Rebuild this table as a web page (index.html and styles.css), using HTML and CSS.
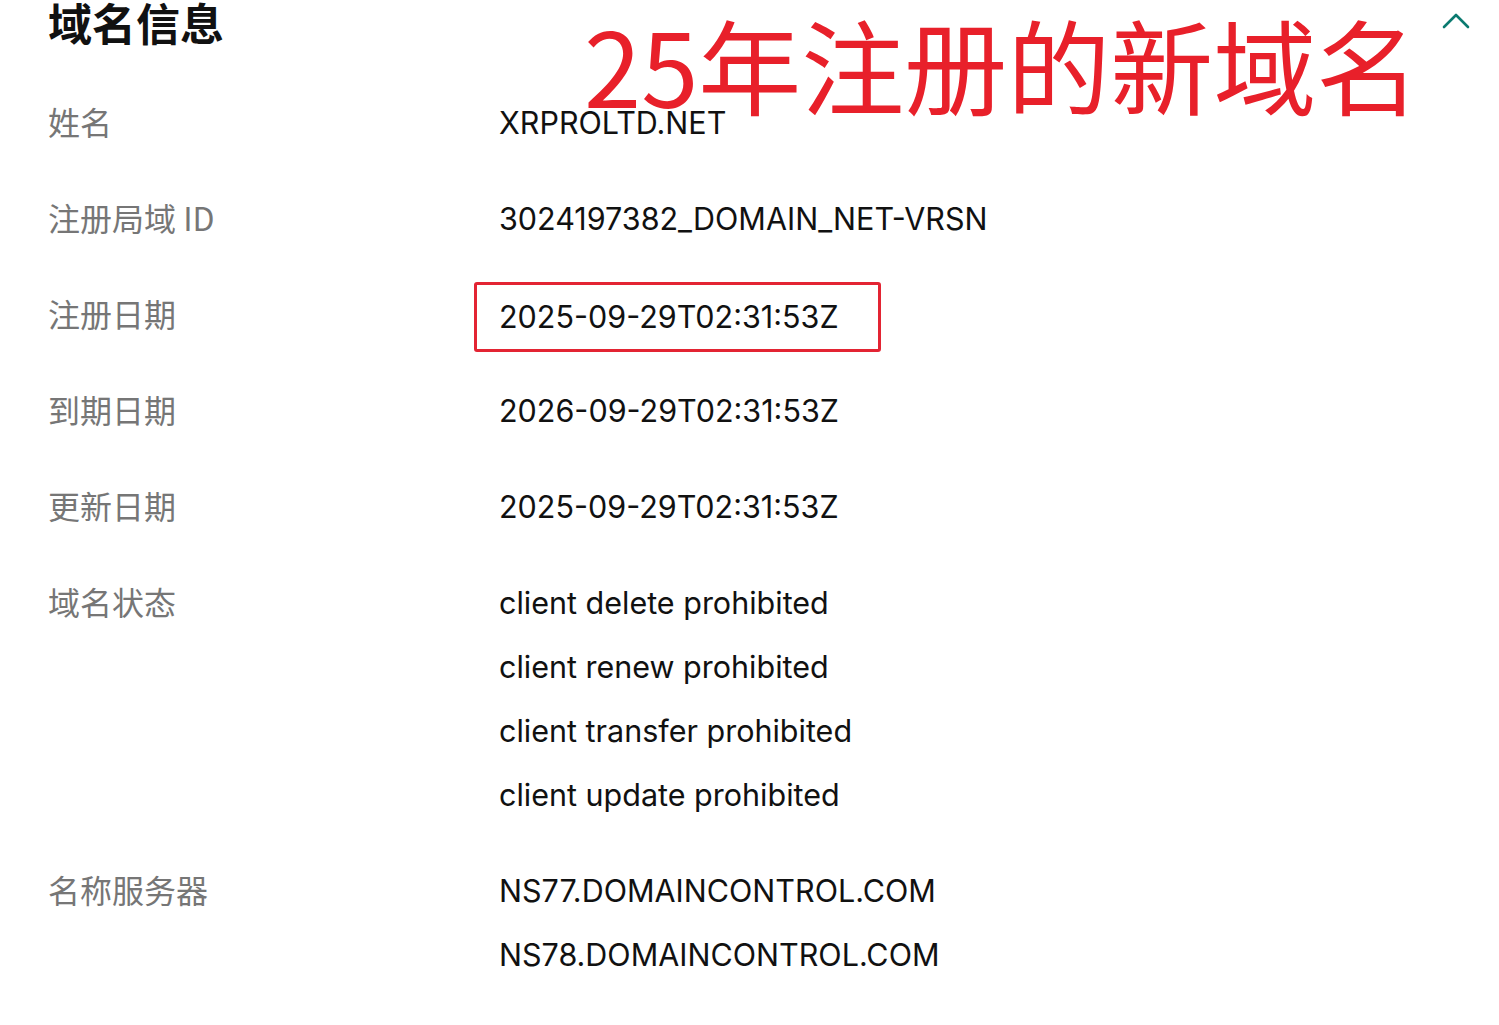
FILE: index.html
```html
<!DOCTYPE html>
<html lang="zh">
<head>
<meta charset="utf-8">
<title>域名信息</title>
<link rel="stylesheet" href="styles.css">
</head>
<body>
<div class="page">
  <header class="head">
    <h1 class="title">域名信息</h1>
    <svg class="chevron" width="30" height="20" viewBox="0 0 30 20"><polyline points="3,16 15,4 27,16" fill="none" stroke="#0b7a70" stroke-width="2.6" stroke-linecap="round" stroke-linejoin="round"/></svg>
  </header>
  <div class="overlay">25年注册的新域名</div>
  <dl class="info">
    <div class="row"><dt class="label">姓名</dt><dd class="value">XRPROLTD.NET</dd></div>
    <div class="row"><dt class="label">注册局域 ID</dt><dd class="value">3024197382_DOMAIN_NET-VRSN</dd></div>
    <div class="row"><dt class="label">注册日期</dt><dd class="value boxed"><span class="mark">2025-09-29T02:31:53Z</span></dd></div>
    <div class="row"><dt class="label">到期日期</dt><dd class="value">2026-09-29T02:31:53Z</dd></div>
    <div class="row"><dt class="label">更新日期</dt><dd class="value">2025-09-29T02:31:53Z</dd></div>
    <div class="row"><dt class="label">域名状态</dt><dd class="value list"><span>client delete prohibited</span><span>client renew prohibited</span><span>client transfer prohibited</span><span>client update prohibited</span></dd></div>
    <div class="row"><dt class="label">名称服务器</dt><dd class="value list"><span>NS77.DOMAINCONTROL.COM</span><span>NS78.DOMAINCONTROL.COM</span></dd></div>
  </dl>
</div>
</body>
</html>
```
FILE: styles.css
```css
html, body {
  margin: 0;
  padding: 0;
  background: #ffffff;
}
body {
  font-family: Inter, "Noto Sans", "Noto Sans CJK SC", sans-serif;
  color: #111111;
}
.page {
  position: relative;
  padding: 0 28px 0 48px;
}
.head {
  height: 75px;
  display: flex;
  justify-content: space-between;
  align-items: flex-start;
}
.title {
  margin: 0;
  font-family: "Noto Sans CJK SC", sans-serif;
  font-size: 44px;
  font-weight: 700;
  line-height: 50px;
  margin-top: -3px;
  color: #111111;
}
.chevron {
  margin-top: 11px;
}
.overlay {
  position: absolute;
  left: 584px;
  top: 4px;
  font-family: "Noto Sans CJK SC", sans-serif;
  font-size: 103px;
  line-height: 120px;
  color: #e8202a;
  white-space: nowrap;
}
.info {
  margin: 0;
}
.row {
  display: grid;
  grid-template-columns: 451px 1fr;
  padding: 16px 0;
}
.label {
  margin: 0;
  font-family: "Noto Sans CJK SC", sans-serif;
  font-size: 32px;
  line-height: 64px;
  margin-top: -2px;
  color: #767676;
}
.value {
  margin: 0;
  font-size: 30.5px;
  line-height: 64px;
  color: #111111;
}
.boxed {
  display: flex;
  align-items: center;
  height: 64px;
}
.list {
  display: flex;
  flex-direction: column;
}
.mark {
  display: block;
  box-sizing: border-box;
  height: 70px;
  border: 3px solid #e32433;
  border-radius: 3px;
  padding: 14px 39px 14px 22px;
  margin: -1px 0 -5px -25px;
  line-height: 36px;
}
```
